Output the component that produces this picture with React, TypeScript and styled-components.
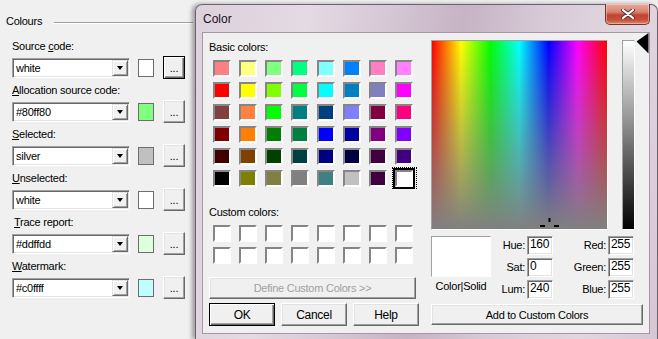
import React from "react";
import styled, { createGlobalStyle } from "styled-components";

type ColourField = {
  before: string;
  key: string;
  after: string;
  value: string;
  swatch: string;
  indent?: number;
  focused?: boolean;
};

const colourFields: ColourField[] = [
  { before: "Source ", key: "c", after: "ode:", value: "white", swatch: "#ffffff", focused: true },
  { before: "", key: "A", after: "llocation source code:", value: "#80ff80", swatch: "#80ff80" },
  { before: "", key: "S", after: "elected:", value: "silver", swatch: "#c0c0c0" },
  { before: "", key: "U", after: "nselected:", value: "white", swatch: "#ffffff" },
  { before: "", key: "T", after: "race report:", value: "#ddffdd", swatch: "#ddffdd", indent: 2 },
  { before: "", key: "W", after: "atermark:", value: "#c0ffff", swatch: "#c0ffff" },
];

const basicColors = [
  "#ff8080", "#ffff80", "#80ff80", "#00ff80", "#80ffff", "#0080ff", "#ff80c0", "#ff80ff",
  "#ff0000", "#ffff00", "#80ff00", "#00ff40", "#00ffff", "#0080c0", "#8080c0", "#ff00ff",
  "#804040", "#ff8040", "#00ff00", "#008080", "#004080", "#8080ff", "#800040", "#ff0080",
  "#800000", "#ff8000", "#008000", "#008040", "#0000ff", "#0000a0", "#800080", "#8000ff",
  "#400000", "#804000", "#004000", "#004040", "#000080", "#000040", "#400040", "#400080",
  "#000000", "#808000", "#808040", "#808080", "#408080", "#c0c0c0", "#400040", "#ffffff",
];

const App = () => {
  return (
    <>
      <GlobalStyle />
      <Screen>
        <SettingsPanel>
          <GroupHeader>
            <GroupTitle>Colours</GroupTitle>
            <GroupRule />
          </GroupHeader>
          <FieldList>
            {colourFields.map((field) => (
              <Field key={field.after}>
                <FieldLabel $indent={field.indent ?? 0}>
                  {field.before}
                  <u>{field.key}</u>
                  {field.after}
                </FieldLabel>
                <ControlRow>
                  <ComboBox>
                    <ComboValue>{field.value}</ComboValue>
                    <DropButton />
                  </ComboBox>
                  <ColorChip $color={field.swatch} />
                  <DotsButton $focused={!!field.focused}>...</DotsButton>
                </ControlRow>
              </Field>
            ))}
          </FieldList>
        </SettingsPanel>

        <Dialog>
          <TitleBar>
            <TitleText>Color</TitleText>
            <CloseButton>
              <svg width="14" height="10" viewBox="0 0 14 10">
                <path d="M2 1 L12 9 M12 1 L2 9" stroke="#4a3a3a" strokeWidth="4" strokeLinecap="round" />
                <path d="M2 1 L12 9 M12 1 L2 9" stroke="#ffffff" strokeWidth="2.2" strokeLinecap="round" />
              </svg>
            </CloseButton>
          </TitleBar>
          <Client>
            <PaletteColumn>
              <SectionLabel>Basic colors:</SectionLabel>
              <SwatchGrid>
                {basicColors.map((color, i) => (
                  <SwatchCell key={i} $selected={i === basicColors.length - 1}>
                    <Swatch $color={color} $selected={i === basicColors.length - 1} />
                  </SwatchCell>
                ))}
              </SwatchGrid>
              <SectionLabel $gap={17}>Custom colors:</SectionLabel>
              <SwatchGrid>
                {Array.from({ length: 16 }).map((_, i) => (
                  <SwatchCell key={i} $selected={false}>
                    <Swatch $color="#ffffff" $selected={false} />
                  </SwatchCell>
                ))}
              </SwatchGrid>
              <DefineButton>Define Custom Colors &gt;&gt;</DefineButton>
              <ButtonRow>
                <DialogButton $default>OK</DialogButton>
                <DialogButton>Cancel</DialogButton>
                <DialogButton>Help</DialogButton>
              </ButtonRow>
            </PaletteColumn>

            <MixerColumn>
              <SpectrumRow>
                <Spectrum>
                  <Crosshair width="21" height="21" viewBox="0 0 21 21">
                    <rect x="9.5" y="2" width="2" height="4" fill="#000" />
                    <rect x="1" y="9" width="5" height="2" fill="#000" />
                    <rect x="15" y="9" width="5" height="2" fill="#000" />
                    <rect x="9.5" y="14" width="2" height="4" fill="#000" />
                  </Crosshair>
                </Spectrum>
                <LumBar />
                <LumArrow width="13" height="21" viewBox="0 0 13 21">
                  <polygon points="12.5,0 0.5,8.5 12.5,20.5" fill="#000" />
                </LumArrow>
              </SpectrumRow>

              <MixerRow>
                <PreviewBlock>
                  <PreviewBox />
                  <PreviewCaption>Color|Solid</PreviewCaption>
                </PreviewBlock>
                <ValueGrid>
                  <ValueLabel>Hue:</ValueLabel>
                  <ValueInput>160</ValueInput>
                  <ValueLabel>Red:</ValueLabel>
                  <ValueInput>255</ValueInput>
                  <ValueLabel>Sat:</ValueLabel>
                  <ValueInput>0</ValueInput>
                  <ValueLabel>Green:</ValueLabel>
                  <ValueInput>255</ValueInput>
                  <ValueLabel>Lum:</ValueLabel>
                  <ValueInput>240</ValueInput>
                  <ValueLabel>Blue:</ValueLabel>
                  <ValueInput>255</ValueInput>
                </ValueGrid>
              </MixerRow>

              <AddButton>Add to Custom Colors</AddButton>
            </MixerColumn>
          </Client>
        </Dialog>
      </Screen>
    </>
  );
};

const GlobalStyle = createGlobalStyle`
  html, body {
    margin: 0;
    padding: 0;
    background: #f0f0f0;
  }
  body {
    font-family: "Liberation Sans", Arial, sans-serif;
    font-size: 11px;
    letter-spacing: -0.25px;
    color: #000;
  }
`;

const Screen = styled.div`
  display: flex;
  width: 658px;
  height: 339px;
  overflow: hidden;
  background: #f0f0f0;
`;

const SettingsPanel = styled.div`
  width: 195px;
  flex-shrink: 0;
  padding-top: 15px;
  box-sizing: border-box;
`;

const GroupHeader = styled.div`
  display: flex;
  align-items: center;
  height: 13px;
  padding-left: 6px;
`;

const GroupTitle = styled.span`
  line-height: 13px;
`;

const GroupRule = styled.div`
  flex: 1;
  margin: 2px 2px 0 12px;
  border-top: 1px solid #a0a0a0;
  border-bottom: 1px solid #ffffff;
`;

const FieldList = styled.div`
  padding-left: 12px;
  margin-top: 12px;
`;

const Field = styled.div`
  margin-bottom: 5px;
`;

const FieldLabel = styled.div<{ $indent: number }>`
  height: 13px;
  line-height: 13px;
  padding-left: ${({ $indent }) => $indent}px;
  white-space: nowrap;
`;

const ControlRow = styled.div`
  display: flex;
  align-items: center;
  height: 23px;
  margin-top: 3px;
`;

const ComboBox = styled.div`
  box-sizing: border-box;
  width: 118px;
  height: 20px;
  display: flex;
  padding: 1px;
  background: #ffffff;
  border: 1px solid;
  border-color: #a0a0a0 #ffffff #ffffff #a0a0a0;
  box-shadow: inset 1px 1px 0 #696969, inset -1px -1px 0 #e3e3e3;
`;

const ComboValue = styled.span`
  flex: 1;
  padding-left: 2px;
  line-height: 16px;
`;

const DropButton = styled.div`
  box-sizing: border-box;
  width: 16px;
  display: flex;
  align-items: center;
  justify-content: center;
  background: #f0f0f0;
  border: 1px solid;
  border-color: #e3e3e3 #696969 #696969 #e3e3e3;
  box-shadow: inset 1px 1px 0 #ffffff, inset -1px -1px 0 #a0a0a0;

  &::after {
    content: "";
    border-left: 3.5px solid transparent;
    border-right: 3.5px solid transparent;
    border-top: 4px solid #000;
    margin-top: 1px;
  }
`;

const ColorChip = styled.div<{ $color: string }>`
  box-sizing: border-box;
  width: 16px;
  height: 18px;
  margin-left: 8px;
  background: ${({ $color }) => $color};
  border: 1px solid #6d6d6d;
`;

const raised = `
  border: 1px solid;
  border-color: #ffffff #696969 #696969 #ffffff;
  box-shadow: inset -1px -1px 0 #a0a0a0, inset 1px 1px 0 #e3e3e3;
`;

const DotsButton = styled.div<{ $focused: boolean }>`
  box-sizing: border-box;
  width: 22px;
  height: 23px;
  margin-left: 9px;
  display: flex;
  align-items: flex-end;
  justify-content: center;
  padding-bottom: 4px;
  line-height: 11px;
  background: #f0f0f0;
  ${raised}
  ${({ $focused }) =>
    $focused &&
    `
    border-color: #000;
    box-shadow: inset 1px 1px 0 #ffffff, inset -1px -1px 0 #696969, inset -2px -2px 0 #a0a0a0;
  `}
`;

const Dialog = styled.div`
  box-sizing: border-box;
  width: 463px;
  height: 335px;
  margin-top: 4px;
  flex-shrink: 0;
  display: flex;
  flex-direction: column;
  padding: 0 7px 5px 6px;
  border: 1px solid #6f6270;
  border-bottom: none;
  border-radius: 7px 7px 0 0;
  background: linear-gradient(
    100deg,
    #ddd1dc 0%,
    #e4dae3 22%,
    #d3c4d2 40%,
    #c6b3c5 52%,
    #d8cbd7 68%,
    #e2d7e1 85%,
    #d5c7d4 100%
  );
  box-shadow: -3px 0 4px rgba(0, 0, 0, 0.35);
`;

const TitleBar = styled.div`
  display: flex;
  justify-content: space-between;
  height: 27px;
  flex-shrink: 0;
`;

const TitleText = styled.span`
  align-self: center;
  padding-left: 1px;
  font-size: 12px;
  letter-spacing: 0;
  color: #1a1020;
`;

const CloseButton = styled.div`
  box-sizing: border-box;
  width: 45px;
  height: 21px;
  margin-top: -1px;
  display: flex;
  align-items: center;
  justify-content: center;
  border: 1px solid #6b3a35;
  border-top: none;
  border-radius: 0 0 5px 5px;
  background: linear-gradient(
    to bottom,
    #e9a99c 0%,
    #d8826f 40%,
    #c1442f 55%,
    #c7503a 80%,
    #de8a72 100%
  );
  box-shadow: inset 0 0 0 1px rgba(255, 220, 210, 0.45);
`;

const Client = styled.div`
  flex: 1;
  display: flex;
  background: #f0f0f0;
  border: 1px solid #a597a4;
`;

const PaletteColumn = styled.div`
  box-sizing: border-box;
  width: 228px;
  flex-shrink: 0;
  padding: 8px 0 0 6px;
  display: flex;
  flex-direction: column;
`;

const SectionLabel = styled.div<{ $gap?: number }>`
  height: 13px;
  line-height: 13px;
  margin-top: ${({ $gap }) => $gap ?? 0}px;
`;

const SwatchGrid = styled.div`
  display: grid;
  grid-template-columns: repeat(8, 26px);
  grid-auto-rows: 22px;
  margin: 3px 0 0 1px;
`;

const SwatchCell = styled.div<{ $selected: boolean }>`
  box-sizing: border-box;
  padding: 3px 0 0 3px;
  ${({ $selected }) =>
    $selected &&
    `
    border: 1px dotted #000;
    padding: 2px 0 0 2px;
    width: 25px;
  `}
`;

const Swatch = styled.div<{ $color: string; $selected: boolean }>`
  box-sizing: border-box;
  width: 18px;
  height: 17px;
  background: ${({ $color }) => $color};
  border: 2px solid;
  border-color: #858585 #ffffff #ffffff #858585;
  ${({ $selected }) =>
    $selected &&
    `
    box-shadow: 0 0 0 2px #000;
  `}
`;

const DefineButton = styled.div`
  box-sizing: border-box;
  width: 207px;
  height: 22px;
  margin-top: 11px;
  display: flex;
  align-items: center;
  justify-content: center;
  color: #a0a0a0;
  background: #f0f0f0;
  ${raised}
`;

const ButtonRow = styled.div`
  display: flex;
  gap: 6px;
  margin-top: 4px;
`;

const DialogButton = styled.div<{ $default?: boolean }>`
  box-sizing: border-box;
  width: 66px;
  height: 23px;
  display: flex;
  align-items: center;
  justify-content: center;
  font-size: 12px;
  letter-spacing: -0.3px;
  background: #f0f0f0;
  ${raised}
  ${({ $default }) =>
    $default &&
    `
    border-color: #000;
    box-shadow: inset 1px 1px 0 #ffffff, inset -1px -1px 0 #696969, inset -2px -2px 0 #a0a0a0;
  `}
`;

const MixerColumn = styled.div`
  flex: 1;
  display: flex;
  flex-direction: column;
  padding-top: 7px;
`;

const SpectrumRow = styled.div`
  display: flex;
  height: 190px;
`;

const Spectrum = styled.div`
  position: relative;
  box-sizing: border-box;
  width: 177px;
  height: 190px;
  overflow: hidden;
  border: 1px solid;
  border-color: #a0a0a0 #ffffff #ffffff #a0a0a0;
  background: linear-gradient(to bottom, rgba(128, 128, 128, 0) 0%, #808080 100%),
    linear-gradient(
      to right,
      #ff0000 0%,
      #ffff00 16.67%,
      #00ff00 33.33%,
      #00ffff 50%,
      #0000ff 66.67%,
      #ff00ff 83.33%,
      #ff0000 100%
    );
`;

const Crosshair = styled.svg`
  position: absolute;
  left: 107px;
  top: 175px;
`;

const LumBar = styled.div`
  box-sizing: border-box;
  width: 13px;
  height: 190px;
  margin-left: 14px;
  border: 1px solid;
  border-color: #a0a0a0 #ffffff #ffffff #a0a0a0;
  background: linear-gradient(to bottom, #ffffff, #000000);
`;

const LumArrow = styled.svg`
  margin: -7px 0 0 1px;
`;

const MixerRow = styled.div`
  display: flex;
  margin-top: 6px;
`;

const PreviewBlock = styled.div`
  width: 60px;
  display: flex;
  flex-direction: column;
`;

const PreviewBox = styled.div`
  box-sizing: border-box;
  height: 41px;
  background: #ffffff;
  border: 1px solid;
  border-color: #a0a0a0 #ffffff #ffffff #a0a0a0;
`;

const PreviewCaption = styled.div`
  margin-top: 3px;
  line-height: 13px;
  text-align: center;
  white-space: nowrap;
`;

const ValueGrid = styled.div`
  display: grid;
  grid-template-columns: 34px 26px 51px 26px;
  grid-auto-rows: 19px;
  column-gap: 2px;
  row-gap: 3px;
`;

const ValueLabel = styled.div`
  line-height: 19px;
  text-align: right;
`;

const ValueInput = styled.div`
  box-sizing: border-box;
  padding-left: 2px;
  line-height: 15px;
  background: #ffffff;
  border: 1px solid;
  border-color: #a0a0a0 #ffffff #ffffff #a0a0a0;
  box-shadow: inset 1px 1px 0 #696969, inset -1px -1px 0 #e3e3e3;
  font-size: 12px;
  letter-spacing: -0.3px;
`;

const AddButton = styled.div`
  box-sizing: border-box;
  width: 212px;
  height: 21px;
  margin-top: 5px;
  display: flex;
  align-items: center;
  justify-content: center;
  background: #f0f0f0;
  ${raised}
`;

export default App;
